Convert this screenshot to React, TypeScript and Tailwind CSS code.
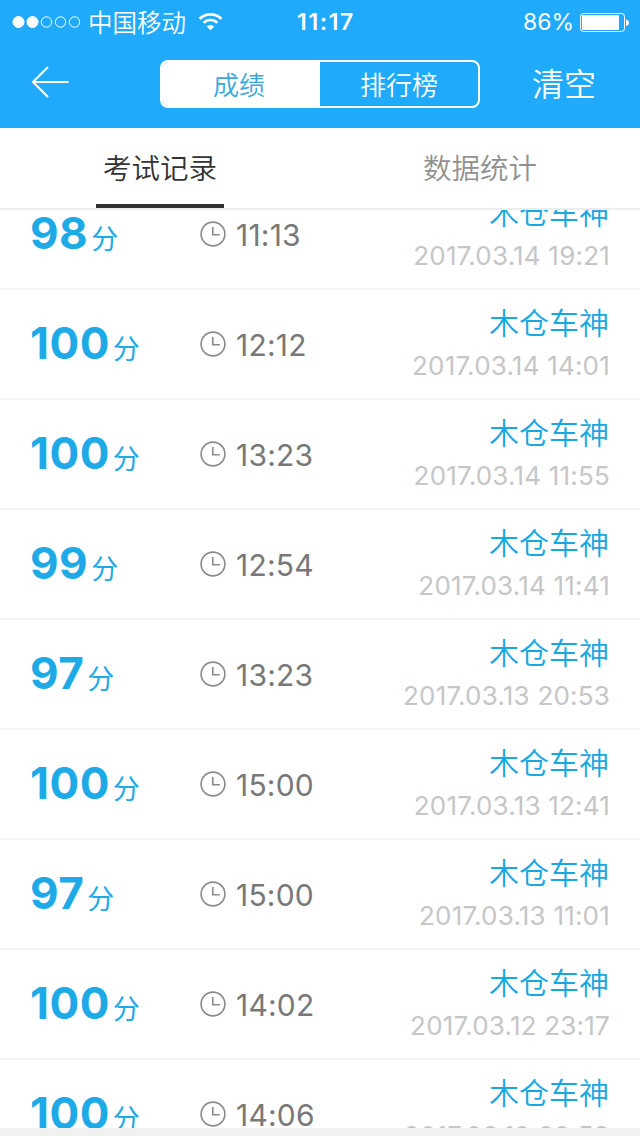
const records = [
  { score: 98, duration: "11:13", name: "木仓车神", date: "2017.03.14 19:21" },
  { score: 100, duration: "12:12", name: "木仓车神", date: "2017.03.14 14:01" },
  { score: 100, duration: "13:23", name: "木仓车神", date: "2017.03.14 11:55" },
  { score: 99, duration: "12:54", name: "木仓车神", date: "2017.03.14 11:41" },
  { score: 97, duration: "13:23", name: "木仓车神", date: "2017.03.13 20:53" },
  { score: 100, duration: "15:00", name: "木仓车神", date: "2017.03.13 12:41" },
  { score: 97, duration: "15:00", name: "木仓车神", date: "2017.03.13 11:01" },
  { score: 100, duration: "14:02", name: "木仓车神", date: "2017.03.12 23:17" },
  { score: 100, duration: "14:06", name: "木仓车神", date: "2017.03.12 22:53" },
];

const StatusBar = () => (
  <div className="grid h-10 grid-cols-3 items-center pl-3 pr-2.5">
    <div className="flex items-center">
      <svg width="69" height="14" viewBox="0 0 69 14" className="shrink-0">
        {[0, 1, 2, 3, 4].map((dot) => (
          <circle key={dot} cx={6.5 + dot * 14} cy="7" r={dot < 2 ? 5.5 : 5.2} fill={dot < 2 ? "white" : "none"} stroke="white" strokeWidth="1" />
        ))}
      </svg>
      <span className="ml-[7px] whitespace-nowrap pt-0.5 text-[24.5px] leading-[42px] font-[350]">中国移动</span>
      <svg width="25" height="18" viewBox="0 0 26 19" className="ml-3 shrink-0" fill="none" stroke="white">
        <path d="M1.5 6.2a16.3 16.3 0 0 1 23 0" strokeWidth="3" />
        <path d="M5.8 10.4a10.2 10.2 0 0 1 14.4 0" strokeWidth="2.8" />
        <path d="M13 18.2l-4-4a5.7 5.7 0 0 1 8 0z" fill="white" stroke="none" />
      </svg>
    </div>
    <span className="pl-2.5 pt-px text-center text-[23px] font-semibold tracking-[1.6px]">11:17</span>
    <div className="flex items-center justify-end pt-px">
      <span className="text-[23px]">86%</span>
      <svg width="50" height="20" viewBox="0 0 50 20" className="ml-1.5 shrink-0">
        <rect x="0.5" y="0.5" width="44" height="18" rx="3" fill="none" stroke="white" />
        <rect x="2" y="2" width="37" height="15" rx="1" fill="white" />
        <path d="M46 6.5c4 .5 4 6 0 6.5z" fill="white" />
      </svg>
    </div>
  </div>
);

const Clock = () => (
  <svg width="26" height="26" viewBox="0 0 26 26" fill="none" stroke="#8a8a8a" strokeWidth="1.6">
    <circle cx="13" cy="13" r="11.9" />
    <path d="M12.8 6v7.7h7" />
  </svg>
);

const App = () => {
  return (
    <div className="flex h-[1136px] w-[640px] flex-col overflow-hidden bg-[#f1f1f1] font-['Inter','Noto_Sans_CJK_SC',sans-serif]">
      <header className="h-32 shrink-0 bg-[#20aafc] text-white">
        <StatusBar />
        <div className="flex h-22 items-center justify-between pl-8 pr-11">
          <svg width="37" height="32" viewBox="0 0 37 32" fill="none" stroke="white" strokeWidth="2" className="mb-1">
            <path d="M36.5 16H1.5M16 1L1 16l15 15" />
          </svg>
          <div className="ml-[39px] flex h-12 w-80 overflow-hidden rounded-lg border-2 border-white text-[26px] leading-[48px] font-[350]">
            <span className="w-[158px] bg-white pr-1 text-center text-[#3ba5dc]">成绩</span>
            <span className="w-[158px] text-center">排行榜</span>
          </div>
          <span className="pt-0.5 text-[32px] leading-none font-[350]">清空</span>
        </div>
      </header>

      <nav className="flex h-[82px] shrink-0 justify-around border-b-2 border-[#ececec] bg-white text-[28.5px] font-[350]">
        <span className="h-20 w-32 border-b-4 border-[#333] text-center leading-[81px] text-[#333]">考试记录</span>
        <span className="h-20 w-32 text-center leading-[81px] text-[#919191]">数据统计</span>
      </nav>

      <main className="h-[918px] shrink-0 overflow-hidden bg-white">
        <ul className="-mt-[30px]">
          {records.map((record, index) => (
            <li key={index} className="flex h-[110px] items-center border-b-2 border-[#f4f4f4] pl-[30px] pr-[31px]">
              <div className="flex w-[170px] items-baseline pt-[5px] text-[#1eaae6]">
                <span className="text-[44px] font-bold leading-[54px] tracking-[0.5px]">{record.score}</span>
                <span className="ml-[3px] text-[27px] leading-[54px]">分</span>
              </div>
              <div className="flex items-center text-[#787878]">
                <Clock />
                <span className="ml-2.5 pt-0.5 text-[30px] tracking-[0.2px]">{record.duration}</span>
              </div>
              <div className="ml-auto text-right">
                <div className="text-[30px] leading-[44px] font-[350] text-[#18a7e0]">{record.name}</div>
                <div className="-mr-px text-[26px] leading-[42px] tracking-[0.2px] text-[#c6c6c6]">{record.date}</div>
              </div>
            </li>
          ))}
        </ul>
      </main>
    </div>
  );
};

export default App;
